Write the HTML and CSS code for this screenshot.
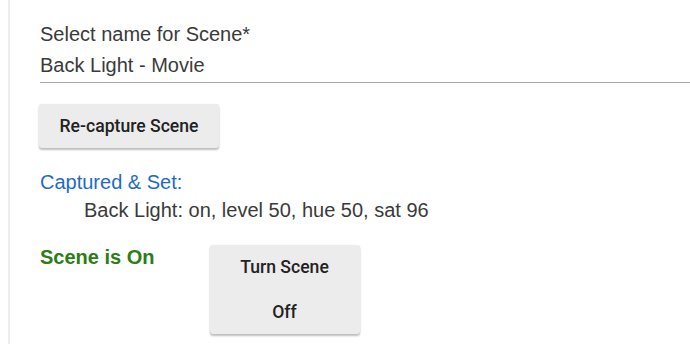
FILE: index.html
```html
<!DOCTYPE html>
<html lang="en">
<head>
    <meta charset="UTF-8">
    <meta name="viewport" content="width=device-width, initial-scale=1.0">
    <title>Scene</title>
    <link rel="stylesheet" href="styles.css">
</head>
<body>
    <div class="panel">
        <div class="field">
            <label class="field-label" for="scene-name">Select name for Scene*</label>
            <div class="field-input" id="scene-name">Back Light - Movie</div>
        </div>

        <button class="btn btn-capture">Re-capture Scene</button>

        <p class="captured-title">Captured &amp; Set:</p>
        <p class="captured-item">Back Light: on, level 50, hue 50, sat 96</p>

        <div class="scene-row">
            <span class="scene-status">Scene is On</span>
            <button class="btn btn-toggle">Turn Scene Off</button>
        </div>
    </div>
</body>
</html>
```

FILE: styles.css
```css
* {
    margin: 0;
    padding: 0;
    box-sizing: border-box;
}

body {
    font-family: 'Liberation Sans', Arial, sans-serif;
    background: #ffffff;
    color: #3a3a3a;
    height: 100vh;
    overflow: hidden;
}

.panel {
    margin-left: 8px;
    min-height: 100vh;
    border-left: 2px solid #ededed;
    padding: 22px 0 0 30px;
}

.field {
    display: flex;
    flex-direction: column;
}

.field-label {
    font-size: 20px;
    line-height: 24px;
}

.field-input {
    font-size: 20px;
    line-height: 24px;
    margin-top: 7px;
    padding-bottom: 5px;
    border-bottom: 1px solid #a8a8a8;
}

.btn {
    font-family: Roboto, 'Liberation Sans', sans-serif;
    font-weight: 500;
    font-size: 17.6px;
    color: #222222;
    background: #ececec;
    border: none;
    border-radius: 3px;
    box-shadow: 0 2px 2px rgba(0, 0, 0, 0.25), 0 0 1px rgba(0, 0, 0, 0.12);
    line-height: 44px;
    cursor: pointer;
}

.btn-capture {
    display: block;
    width: 180px;
    margin: 21px 0 0 -1px;
    padding: 0;
}

.captured-title {
    margin-top: 22px;
    font-size: 20px;
    line-height: 24px;
    color: #1f6bc4;
}

.captured-item {
    margin: 4px 0 0 44px;
    font-size: 20px;
    line-height: 24px;
}

.scene-row {
    display: flex;
    align-items: flex-start;
    gap: 55px;
    margin-top: 23px;
}

.scene-status {
    font-size: 20px;
    font-weight: 700;
    line-height: 24px;
    color: #2b7d14;
}

.btn-toggle {
    width: 150px;
    padding: 0 30px;
    line-height: 44.5px;
}
```
